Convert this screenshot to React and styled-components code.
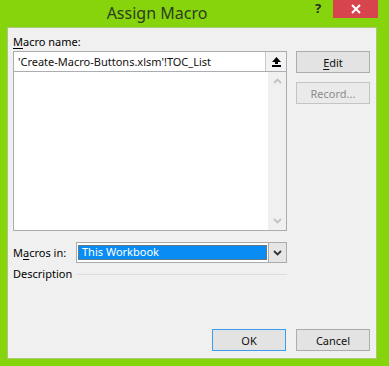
import React from "react";
import styled, { createGlobalStyle } from "styled-components";

const GlobalStyle = createGlobalStyle`
  html, body {
    margin: 0;
    padding: 0;
    background: #86d40c;
  }
  * {
    box-sizing: border-box;
  }
`;

const Frame = styled.div`
  width: 389px;
  height: 366px;
  background: #86d40c;
  display: flex;
  flex-direction: column;
  font-family: "Noto Sans", "Open Sans", sans-serif;
  font-size: 11px;
  color: #000;
`;

const TitleBar = styled.div`
  height: 27px;
  display: flex;
  align-items: flex-start;
`;

const Title = styled.div`
  flex: 1;
  text-align: center;
  font-size: 16px;
  line-height: 26px;
  color: #2f3c1e;
  padding-left: 6px;
`;

const HelpButton = styled.div`
  width: 20px;
  height: 18px;
  font-size: 13px;
  font-weight: bold;
  line-height: 16px;
  text-align: center;
  color: #2a2a2a;
  margin-right: 5px;
`;

const CloseButton = styled.div`
  width: 45px;
  height: 18px;
  background: #d8444d;
  display: flex;
  align-items: center;
  justify-content: center;
  margin-right: 11px;
`;

const Panel = styled.div`
  flex: 1;
  margin: 0 12px 7px 7px;
  background: #f0f0f0;
  border: 1px solid #a9c97a;
  padding: 7px 6px 6px 5px;
  display: flex;
  flex-direction: column;
`;

const TopRow = styled.div`
  display: flex;
  gap: 9px;
`;

const LeftColumn = styled.div`
  width: 274px;
  display: flex;
  flex-direction: column;
`;

const RightColumn = styled.div`
  width: 74px;
  padding-top: 16px;
  display: flex;
  flex-direction: column;
  gap: 9px;
`;

const Label = styled.div`
  height: 16px;
  line-height: 14px;
`;

const Key = styled.span`
  text-decoration: underline;
  text-underline-offset: 2px;
`;

const NameInput = styled.div`
  height: 20px;
  display: flex;
  border: 1px solid #abadb3;
  border-bottom: none;
  background: #fff;
`;

const NameText = styled.div`
  flex: 1;
  line-height: 19px;
  padding-left: 4px;
  color: #111;
  white-space: nowrap;
`;

const CollapseButton = styled.div`
  width: 21px;
  height: 19px;
  border-left: 1px solid #c9c9c9;
  background: #f2f2f2;
  display: flex;
  align-items: center;
  justify-content: center;
`;

const MacroList = styled.div`
  height: 160px;
  border: 1px solid #abadb3;
  background: #fff;
  display: flex;
  justify-content: flex-end;
`;

const ScrollBar = styled.div`
  width: 18px;
  background: #f0f0f0;
  display: flex;
  flex-direction: column;
  justify-content: space-between;
  align-items: center;
  padding: 6px 0;
`;

const Button = styled.div`
  height: 22px;
  width: 74px;
  border: 1px solid ${(p) => (p.$default ? "#3c9cf0" : p.$disabled ? "#c4c4c4" : "#adadad")};
  background: ${(p) => (p.$disabled ? "#eaeaea" : "#e3e3e3")};
  color: ${(p) => (p.$disabled ? "#8a8a8a" : "#111")};
  display: flex;
  align-items: center;
  justify-content: center;
`;

const MacrosRow = styled.div`
  margin-top: 11px;
  width: 274px;
  display: flex;
  align-items: center;
`;

const RowLabel = styled.div`
  width: 63px;
`;

const Select = styled.div`
  flex: 1;
  height: 21px;
  border: 1px solid #acacac;
  background: #fff;
  display: flex;
`;

const SelectValue = styled.div`
  flex: 1;
  margin: 2px 1px;
  background: #0a8cf5;
  outline: 1px dotted #b06a28;
  outline-offset: -1px;
  color: #fff;
  line-height: 14px;
  padding-left: 4px;
`;

const SelectArrow = styled.div`
  width: 18px;
  border-left: 1px solid #acacac;
  background: #e6e6e6;
  display: flex;
  align-items: center;
  justify-content: center;
`;

const DescRow = styled.div`
  margin-top: 3px;
  width: 274px;
  display: flex;
  align-items: center;
  gap: 5px;
`;

const Rule = styled.div`
  flex: 1;
  height: 1px;
  background: #d9dde0;
  margin-top: 1px;
`;

const Footer = styled.div`
  margin-top: auto;
  display: flex;
  justify-content: flex-end;
  gap: 10px;
  padding-bottom: 1px;
`;

const Chevron = ({ up, color }) => (
  <svg width="9" height="6" viewBox="0 0 9 6">
    <path
      d={up ? "M1 5 L4.5 1.5 L8 5" : "M1 1 L4.5 4.5 L8 1"}
      fill="none"
      stroke={color}
      strokeWidth="1.8"
    />
  </svg>
);

const UploadIcon = () => (
  <svg width="9" height="10" viewBox="0 0 9 10">
    <path d="M4.5 0 L9 5 L6 5 L6 7 L3 7 L3 5 L0 5 Z" fill="#000" />
    <rect x="0" y="8" width="9" height="2" fill="#000" />
  </svg>
);

export default function App() {
  return (
    <>
      <GlobalStyle />
      <Frame>
        <TitleBar>
          <Title>Assign Macro</Title>
          <HelpButton>?</HelpButton>
          <CloseButton>
            <svg width="10" height="10" viewBox="0 0 10 10">
              <path d="M1 1 L9 9 M9 1 L1 9" stroke="#fff" strokeWidth="2" />
            </svg>
          </CloseButton>
        </TitleBar>
        <Panel>
          <TopRow>
            <LeftColumn>
              <Label>
                <Key>M</Key>acro name:
              </Label>
              <NameInput>
                <NameText>'Create-Macro-Buttons.xlsm'!TOC_List</NameText>
                <CollapseButton>
                  <UploadIcon />
                </CollapseButton>
              </NameInput>
              <MacroList>
                <ScrollBar>
                  <Chevron up color="#c2c2c2" />
                  <Chevron color="#c2c2c2" />
                </ScrollBar>
              </MacroList>
            </LeftColumn>
            <RightColumn>
              <Button>
                <span>
                  <Key>E</Key>dit
                </span>
              </Button>
              <Button $disabled>Record...</Button>
            </RightColumn>
          </TopRow>
          <MacrosRow>
            <RowLabel>
              M<Key>a</Key>cros in:
            </RowLabel>
            <Select>
              <SelectValue>This Workbook</SelectValue>
              <SelectArrow>
                <Chevron color="#333" />
              </SelectArrow>
            </Select>
          </MacrosRow>
          <DescRow>
            <span>Description</span>
            <Rule />
          </DescRow>
          <Footer>
            <Button $default>OK</Button>
            <Button>Cancel</Button>
          </Footer>
        </Panel>
      </Frame>
    </>
  );
}
